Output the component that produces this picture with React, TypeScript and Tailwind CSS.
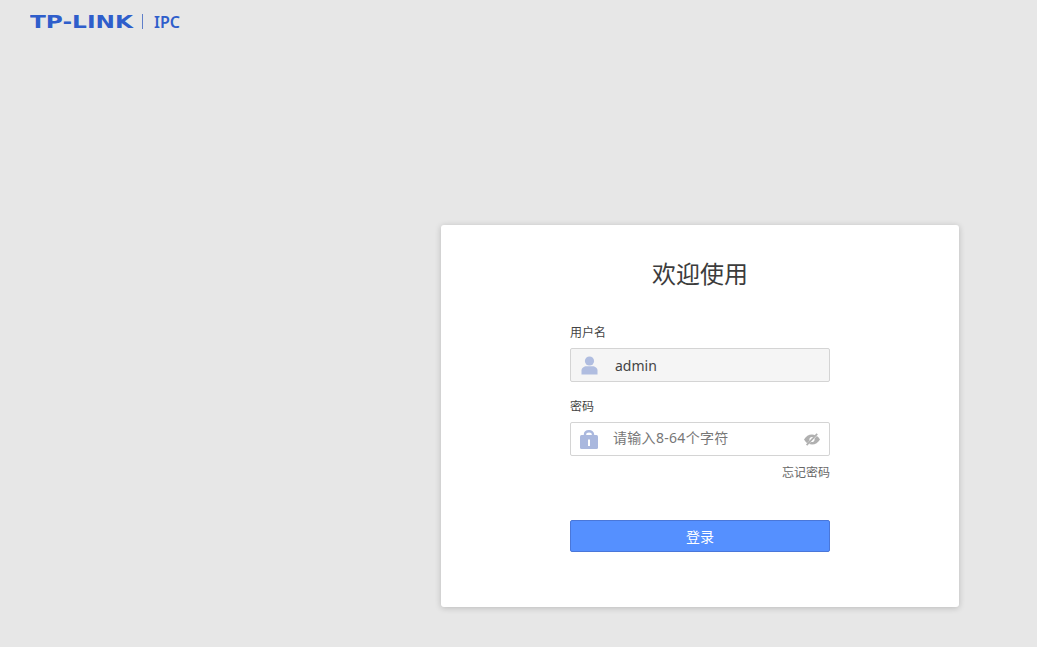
import React from "react";

const font = { fontFamily: '"Noto Sans", "Noto Sans CJK SC", sans-serif' };

const UserIcon = () => (
  <svg width="17" height="19" viewBox="0 0 17 19" fill="#b0bde0">
    <circle cx="8.5" cy="5" r="4.6" />
    <path d="M0.5 18.5V14.5C0.5 12 3 10.3 5.5 10.3H11.5C14 10.3 16.5 12 16.5 14.5V18.5Z" />
  </svg>
);

const LockIcon = () => (
  <svg width="18" height="19" viewBox="0 0 18 19">
    <path d="M5 6V4.5C5 2.4 6.6 1.2 9 1.2S13 2.4 13 4.5V6" fill="none" stroke="#aab8de" strokeWidth="2.4" />
    <rect x="0" y="5" width="18" height="14" rx="1.5" fill="#aab8de" />
    <rect x="8" y="9.5" width="2" height="6.5" fill="#ffffff" />
  </svg>
);

const EyeOffIcon = () => (
  <svg width="16" height="13" viewBox="0 0 16 13" fill="#b0b0b0">
    <path d="M0 6.5C1.8 3.4 4.6 1.5 8 1.5C9.2 1.5 10.3 1.8 11.3 2.2L9.4 4.2C9 4 8.5 3.9 8 3.9C6.5 3.9 5.4 5.1 5.4 6.5C5.4 6.9 5.5 7.3 5.6 7.6L3.2 10.2C1.9 9.3 0.8 8 0 6.5Z" />
    <path d="M16 6.5C14.2 9.6 11.4 11.5 8 11.5C6.9 11.5 5.9 11.3 5 11L6.9 8.9C7.3 9.1 7.7 9.1 8 9.1C9.5 9.1 10.6 7.9 10.6 6.5C10.6 6.2 10.6 5.9 10.5 5.6L12.9 3C14.2 3.9 15.2 5.1 16 6.5Z" />
    <path d="M2.6 12.2L13.2 0.8" stroke="#b0b0b0" strokeWidth="1.7" />
  </svg>
);

export default function App() {
  return (
    <div className="h-screen overflow-hidden bg-[#e7e7e7] text-[#333]" style={font}>
      {/* logo */}
      <div className="flex h-[43px] items-center pl-[30px] text-[#2f5ecb]">
        <div className="w-[103px]">
          <span
            className="inline-block origin-left scale-x-[1.29] text-[18px] leading-none font-bold whitespace-nowrap"
            style={{ fontFamily: '"DejaVu Sans", sans-serif' }}
          >
            TP-LINK
          </span>
        </div>
        <div className="ml-[9px] h-[15px] w-px bg-[#5f7fc9]" />
        <span className="ml-[11px] text-[16px] leading-none font-semibold">IPC</span>
      </div>

      {/* login card */}
      <div className="mt-[182px] ml-[441px] h-[382px] w-[518px] rounded-[3px] bg-white pt-[32px] shadow-[0_1px_6px_rgba(0,0,0,0.2)]">
        <h1 className="text-center text-[24px] leading-[34px] font-normal text-[#3c3c3c]">欢迎使用</h1>

        <div className="mx-auto mt-[33px] w-[260px]">
          <div className="text-[12px] leading-[18px] text-[#444]">用户名</div>
          <div className="mt-[6px] flex h-[34px] items-center rounded-[2px] border border-[#d4d4d4] bg-[#f5f5f5] pl-[10px]">
            <UserIcon />
            <span className="ml-[17px] text-[14px] text-[#444]">admin</span>
          </div>

          <div className="mt-[16px] text-[12px] leading-[18px] text-[#444]">密码</div>
          <div className="mt-[6px] flex h-[34px] items-center rounded-[2px] border border-[#d4d4d4] bg-white pr-[9px] pl-[9px]">
            <LockIcon />
            <span className="ml-[15px] flex-1 pb-[3px] text-[14px] tracking-[0.3px] text-[#777]">请输入8-64个字符</span>
            <EyeOffIcon />
          </div>

          <div className="mt-[8px] text-right text-[12px] leading-[18px] text-[#666]">忘记密码</div>

          <button className="mt-[38px] h-[32px] w-full rounded-[2px] border border-[#4a77d9] bg-[#5590ff] text-[14px] text-white">
            登录
          </button>
        </div>
      </div>
    </div>
  );
}
